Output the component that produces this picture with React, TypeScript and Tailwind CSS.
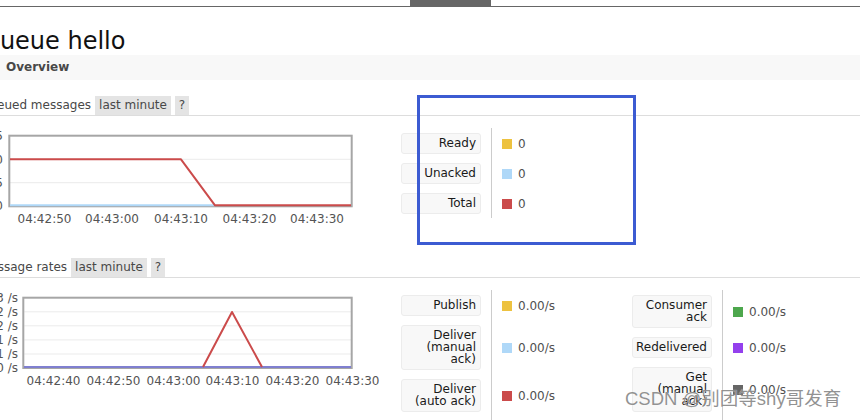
import React from "react";

const FONT = "font-['DejaVu_Sans','Verdana',sans-serif]";

function Label({ children }: { children: React.ReactNode }) {
  return (
    <div className="w-[80px] rounded-[3px] border border-[#ececec] bg-[#f8f8f8] py-[3.5px] pr-[4px] text-right text-[12px] leading-[12px] whitespace-nowrap text-[#1a1a1a]">
      {children}
    </div>
  );
}

function Row({
  label,
  swatch,
  value,
  width = "w-[131px]",
}: {
  label: React.ReactNode;
  swatch: string;
  value: string;
  width?: string;
}) {
  return (
    <div className="flex items-stretch">
      <div className="py-[4.5px]">
        <Label>{label}</Label>
      </div>
      <div className={`ml-[10px] flex items-center border-l border-[#cccccc] pl-[10px] pt-[2px] ${width}`}>
        <span className={`h-[10px] w-[10px] shrink-0 ${swatch}`} />
        <span className="ml-[6px] text-[12px] text-[#505050]">{value}</span>
      </div>
    </div>
  );
}

function SectionHeader({ title, className }: { title: string; className: string }) {
  return (
    <div className={`flex items-center border-b border-[#dddddd] text-[12px] leading-[19px] text-[#484848] ${className}`}>
      <span>{title}</span>
      <span className="ml-[4px] bg-[#e4e4e4] px-[4px]">last minute</span>
      <span className="ml-[4px] bg-[#e4e4e4] px-[4px]">?</span>
    </div>
  );
}

const tickFont = { fontFamily: "'DejaVu Sans', Verdana, sans-serif", fontSize: 12 };

function QueuedChart() {
  const xs = [
    { x: 44.5, t: "04:42:50" },
    { x: 112, t: "04:43:00" },
    { x: 181, t: "04:43:10" },
    { x: 249.5, t: "04:43:20" },
    { x: 317, t: "04:43:30" },
  ];
  const ys = [
    { y: 136, t: "15" },
    { y: 159.3, t: "10" },
    { y: 182.7, t: "5" },
    { y: 206, t: "0" },
  ];
  return (
    <svg width={405} height={100} viewBox="-20 128 405 100" className="block">
      <line x1={10} x2={351} y1={159.3} y2={159.3} stroke="#ebebeb" strokeWidth={1} />
      <line x1={10} x2={351} y1={182.7} y2={182.7} stroke="#ebebeb" strokeWidth={1} />
      <rect x={9.3} y={135.7} width={342.4} height={70.6} fill="none" stroke="#a6a6a6" strokeWidth={2} />
      <polyline points="10,205.3 215,205.3" fill="none" stroke="#afd8f8" strokeWidth={2} />
      <polyline
        points="10,159.3 181,159.3 215,205.3 351,205.3"
        fill="none"
        stroke="#cb4b4b"
        strokeWidth={2}
        strokeLinejoin="round"
      />
      {ys.map((l) => (
        <text key={l.y} x={3} y={l.y + 4.4} textAnchor="end" fill="#545454" style={tickFont}>
          {l.t}
        </text>
      ))}
      {xs.map((l) => (
        <text key={l.x} x={l.x} y={223.1} textAnchor="middle" fill="#545454" style={tickFont}>
          {l.t}
        </text>
      ))}
    </svg>
  );
}

function RatesChart() {
  const xs = [
    { x: 53.5, t: "04:42:40" },
    { x: 113.5, t: "04:42:50" },
    { x: 173.5, t: "04:43:00" },
    { x: 232.5, t: "04:43:10" },
    { x: 292.5, t: "04:43:20" },
    { x: 352.5, t: "04:43:30" },
  ];
  const grid = [311.8, 325.8, 339.9, 354];
  const ys = [
    { y: 298, t: "0.03 /s" },
    { y: 311.8, t: "0.02 /s" },
    { y: 325.8, t: "0.02 /s" },
    { y: 339.9, t: "0.01 /s" },
    { y: 354, t: "0.01 /s" },
    { y: 367.5, t: "0.00 /s" },
  ];
  return (
    <svg width={405} height={100} viewBox="-20 290 405 100" className="block">
      {grid.map((g) => (
        <line key={g} x1={24.3} x2={351} y1={g} y2={g} stroke="#ebebeb" strokeWidth={1} />
      ))}
      <rect x={23.3} y={297.7} width={328.4} height={70.3} fill="none" stroke="#a6a6a6" strokeWidth={2} />
      <polyline points="24,367 351,367" fill="none" stroke="#7f7fd0" strokeWidth={2} />
      <polyline
        points="203,367 232,312 262,367"
        fill="none"
        stroke="#cb4b4b"
        strokeWidth={2}
        strokeLinejoin="round"
      />
      {ys.map((l, i) => (
        <text key={i} x={18} y={l.y + 4.4} textAnchor="end" fill="#545454" style={tickFont}>
          {l.t}
        </text>
      ))}
      {xs.map((l) => (
        <text key={l.x} x={l.x} y={385} textAnchor="middle" fill="#545454" style={tickFont}>
          {l.t}
        </text>
      ))}
    </svg>
  );
}

export default function App() {
  return (
    <div className={`relative h-[420px] w-[860px] overflow-hidden bg-white ${FONT}`}>
      {/* top bar */}
      <div className="h-[7px] border-b border-[#666] pl-[410px]">
        <div className="h-[6px] w-[81px] bg-[#666]" />
      </div>

      <div className="ml-[-20px] w-[880px]">
        <h1 className="mt-[20px] pl-[1px] text-[24px] leading-[28px] font-normal text-[#111]">Queue hello</h1>

        <div className="h-[25px] bg-[#f8f8f8] pl-[26px] text-[12px] leading-[25px] font-bold text-[#484848]">
          Overview
        </div>

        <SectionHeader title="Queued messages" className="mt-[16px]" />

        <div className="flex h-[142px] items-start pt-[12px]">
          <div className="w-[421px] shrink-0">
            <QueuedChart />
          </div>
          <div className="flex flex-col">
            <Row label="Ready" swatch="bg-[#edc240]" value="0" />
            <Row label="Unacked" swatch="bg-[#afd8f8]" value="0" />
            <Row label="Total" swatch="bg-[#cb4b4b]" value="0" />
          </div>
        </div>

        <SectionHeader title="Message rates" className="" />

        <div className="flex items-start pt-[12px]">
          <div className="w-[421px] shrink-0">
            <RatesChart />
          </div>
          <div className="flex items-start">
            <div className="flex flex-col">
              <Row label="Publish" swatch="bg-[#edc240]" value="0.00/s" />
              <Row
                label={
                  <>
                    Deliver
                    <br />
                    (manual
                    <br />
                    ack)
                  </>
                }
                swatch="bg-[#afd8f8]"
                value="0.00/s"
              />
              <Row
                label={
                  <>
                    Deliver
                    <br />
                    (auto ack)
                  </>
                }
                swatch="bg-[#cb4b4b]"
                value="0.00/s"
              />
              <Row
                label={
                  <>
                    Deliver
                    <br />
                    (noack)
                  </>
                }
                swatch="bg-[#4da74d]"
                value="0.00/s"
              />
            </div>
            <div className="ml-[10px] flex flex-col">
              <Row
                label={
                  <>
                    Consumer
                    <br />
                    ack
                  </>
                }
                swatch="bg-[#4da74d]"
                value="0.00/s"
              />
              <Row label="Redelivered" swatch="bg-[#9440ed]" value="0.00/s" />
              <Row
                label={
                  <>
                    Get
                    <br />
                    (manual
                    <br />
                    ack)
                  </>
                }
                swatch="bg-[#666666]"
                value="0.00/s"
              />
              <Row
                label={
                  <>
                    Get
                    <br />
                    (auto ack)
                  </>
                }
                swatch="bg-[#aaaaaa]"
                value="0.00/s"
              />
            </div>
          </div>
        </div>
      </div>

      {/* annotation rectangle */}
      <div className="absolute left-[417px] top-[95px] h-[150px] w-[219px] border-[3px] border-[#3c5bd2]" />

      {/* watermark */}
      <div className="pointer-events-none absolute left-[625px] top-[387px] text-[18.5px] leading-[24px] whitespace-nowrap text-[rgba(110,110,110,0.75)] font-['Liberation_Sans','Noto_Sans_CJK_SC',sans-serif] [text-shadow:0_0_1px_rgba(255,255,255,0.9)]">
        CSDN @别团等shy哥发育
      </div>
    </div>
  );
}
